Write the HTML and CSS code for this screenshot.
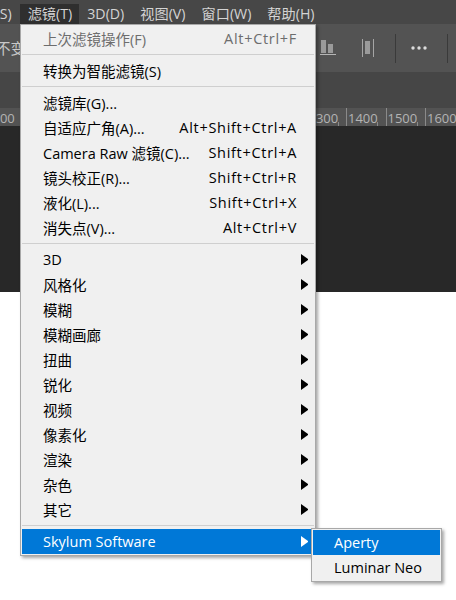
FILE: index.html
```html
<!DOCTYPE html>
<html lang="zh-CN">
<head>
    <meta charset="UTF-8">
    <meta name="viewport" content="width=device-width, initial-scale=1.0">
    <title>滤镜菜单</title>
    <link rel="stylesheet" href="styles.css">
</head>
<body>
    <div class="workspace">
        <div class="menubar">
            <span class="menubar-item first">(S)</span>
            <span class="menubar-item active">滤镜(T)</span>
            <span class="menubar-item">3D(D)</span>
            <span class="menubar-item">视图(V)</span>
            <span class="menubar-item">窗口(W)</span>
            <span class="menubar-item">帮助(H)</span>
        </div>

        <div class="optionsbar">
            <span class="options-label">不变</span>
            <div class="options-tools">
                <svg class="tool" width="18" height="18" viewBox="0 0 18 18">
                    <rect x="3" y="1" width="5" height="13" fill="#9a9a9a"/>
                    <rect x="10" y="5" width="5" height="9" fill="#9a9a9a"/>
                    <rect x="2" y="15" width="16" height="1" fill="#b5b5b5"/>
                </svg>
                <svg class="tool tool-dist" width="14" height="18" viewBox="0 0 14 18">
                    <rect x="1" y="0" width="1" height="18" fill="#a5a5a5"/>
                    <rect x="4" y="2" width="5" height="13" fill="#9a9a9a"/>
                    <rect x="12" y="0" width="1" height="18" fill="#a5a5a5"/>
                </svg>
                <span class="tool-sep"></span>
                <svg class="tool tool-more" width="16" height="4" viewBox="0 0 16 4">
                    <circle cx="2" cy="2" r="1.7" fill="#dcdcdc"/>
                    <circle cx="8" cy="2" r="1.7" fill="#dcdcdc"/>
                    <circle cx="14" cy="2" r="1.7" fill="#dcdcdc"/>
                </svg>
                <span class="tool-sep"></span>
                <span class="tool-cut">1</span>
            </div>
        </div>

        <div class="tabstrip"></div>

        <div class="ruler">
            <span class="ruler-cell">500</span>
            <span class="ruler-cell">600</span>
            <span class="ruler-cell">700</span>
            <span class="ruler-cell">800</span>
            <span class="ruler-cell">900</span>
            <span class="ruler-cell">1000</span>
            <span class="ruler-cell">1100</span>
            <span class="ruler-cell">1200</span>
            <span class="ruler-cell">1300</span>
            <span class="ruler-cell">1400</span>
            <span class="ruler-cell">1500</span>
            <span class="ruler-cell">1600</span>
            <span class="ruler-cell">1700</span>
        </div>

        <div class="canvas"></div>
    </div>

    <div class="dropdown">
        <div class="item disabled"><span class="label">上次滤镜操作(F)</span><span class="shortcut">Alt+Ctrl+F</span><span class="sub"></span></div>
        <div class="separator"></div>
        <div class="item"><span class="label">转换为智能滤镜(S)</span><span class="sub"></span></div>
        <div class="separator"></div>
        <div class="item"><span class="label">滤镜库(G)...</span><span class="sub"></span></div>
        <div class="item"><span class="label">自适应广角(A)...</span><span class="shortcut">Alt+Shift+Ctrl+A</span><span class="sub"></span></div>
        <div class="item"><span class="label">Camera Raw 滤镜(C)...</span><span class="shortcut">Shift+Ctrl+A</span><span class="sub"></span></div>
        <div class="item"><span class="label">镜头校正(R)...</span><span class="shortcut">Shift+Ctrl+R</span><span class="sub"></span></div>
        <div class="item"><span class="label">液化(L)...</span><span class="shortcut">Shift+Ctrl+X</span><span class="sub"></span></div>
        <div class="item"><span class="label">消失点(V)...</span><span class="shortcut">Alt+Ctrl+V</span><span class="sub"></span></div>
        <div class="separator"></div>
        <div class="item"><span class="label">3D</span><span class="sub arrow"></span></div>
        <div class="item"><span class="label">风格化</span><span class="sub arrow"></span></div>
        <div class="item"><span class="label">模糊</span><span class="sub arrow"></span></div>
        <div class="item"><span class="label">模糊画廊</span><span class="sub arrow"></span></div>
        <div class="item"><span class="label">扭曲</span><span class="sub arrow"></span></div>
        <div class="item"><span class="label">锐化</span><span class="sub arrow"></span></div>
        <div class="item"><span class="label">视频</span><span class="sub arrow"></span></div>
        <div class="item"><span class="label">像素化</span><span class="sub arrow"></span></div>
        <div class="item"><span class="label">渲染</span><span class="sub arrow"></span></div>
        <div class="item"><span class="label">杂色</span><span class="sub arrow"></span></div>
        <div class="item"><span class="label">其它</span><span class="sub arrow"></span></div>
        <div class="separator"></div>
        <div class="item selected has-submenu">
            <span class="label">Skylum Software</span><span class="sub arrow"></span>
            <div class="dropdown submenu">
                <div class="item selected"><span class="label">Aperty</span></div>
                <div class="item"><span class="label">Luminar Neo</span></div>
            </div>
        </div>
    </div>
</body>
</html>
```

FILE: styles.css
```css
body {
    margin: 0;
    background-color: #ffffff;
    font-family: "Open Sans", "Noto Sans CJK SC", sans-serif;
    font-size: 14.5px;
    overflow: hidden;
}

/* photoshop window behind the menu */
.workspace {
    width: 456px;
    overflow: hidden;
}
.menubar {
    height: 24px;
    padding-top: 4px;
    box-sizing: border-box;
    display: flex;
    background-color: #474747;
    color: #d4d4d4;
    font-size: 14.2px;
    white-space: nowrap;
}
.menubar-item {
    height: 20px;
    line-height: 20px;
    padding: 0 8px;
}
.menubar-item.first {
    margin-left: -12.5px;
}
.menubar-item.active {
    background-color: #2f2f2f;
    padding: 0 7px 0 8px;
}

.optionsbar {
    height: 48px;
    display: flex;
    align-items: center;
    background-color: #535353;
    color: #c8c8c8;
}
.options-label {
    margin-left: -4px;
    margin-top: -2px;
}
.options-tools {
    margin-left: auto;
    display: flex;
    align-items: center;
    height: 100%;
    margin-right: -8px;
}
.tool {
    display: block;
}
.tool-dist {
    margin-left: 25px;
}
.tool-sep {
    width: 1px;
    height: 29px;
    background-color: #3a3a3a;
    margin: 0 0 0 20px;
}
.tool-more {
    margin-left: 15px;
}
.tool-more + .tool-sep {
    margin-left: 20px;
}
.tool-sep + .tool-cut {
    margin-left: 8px;
}
.tool-cut {
    width: 8px;
    color: #b0b0b0;
    font-size: 13px;
    margin-top: -2px;
}

.tabstrip {
    height: 36px;
    background-color: #464646;
}

.ruler {
    height: 18px;
    display: flex;
    margin-left: -9.5px;
    background-color: #535353;
    color: #b4b4b4;
    font-size: 13px;
    white-space: nowrap;
}
.ruler-cell {
    flex: 0 0 39.5px;
    box-sizing: border-box;
    border-left: 1px solid #8a8a8a;
    padding-left: 1px;
    line-height: 20px;
    overflow: hidden;
    background: linear-gradient(#8a8a8a, #8a8a8a) 30px 100% / 1px 4px no-repeat;
}

.canvas {
    height: 166px;
    background-color: #282828;
}

/* filter menu */
.dropdown {
    position: absolute;
    top: 24px;
    left: 20px;
    width: 296px;
    box-sizing: border-box;
    padding: 1px;
    background-color: #f0f0f0;
    border: 1px solid #a8a8a8;
    box-shadow: 2px 2px 3px rgba(0, 0, 0, 0.35);
    color: #000000;
}
.item {
    height: 25px;
    display: flex;
    align-items: center;
    padding: 0 6px 0 21px;
    white-space: nowrap;
}
.item .shortcut {
    margin-left: auto;
    letter-spacing: 0.7px;
}
.item .sub {
    width: 7px;
    height: 11px;
    margin-left: auto;
    flex: none;
}
.item .shortcut + .sub {
    margin-left: 4px;
}
.item .arrow {
    box-sizing: border-box;
    border-left: 7px solid #000000;
    border-top: 5.5px solid transparent;
    border-bottom: 5.5px solid transparent;
}
.item.disabled {
    color: #6d6d6d;
}
.item.selected {
    background-color: #0078d7;
    color: #ffffff;
}
.item.selected .arrow {
    border-left-color: #ffffff;
}
.separator {
    height: 1px;
    margin: 3px 0;
    background-color: #cfcfcf;
}

.has-submenu {
    position: relative;
}
.submenu {
    top: -1px;
    left: 289px;
    width: 131px;
}
.submenu .item {
    padding-right: 10px;
}
```
